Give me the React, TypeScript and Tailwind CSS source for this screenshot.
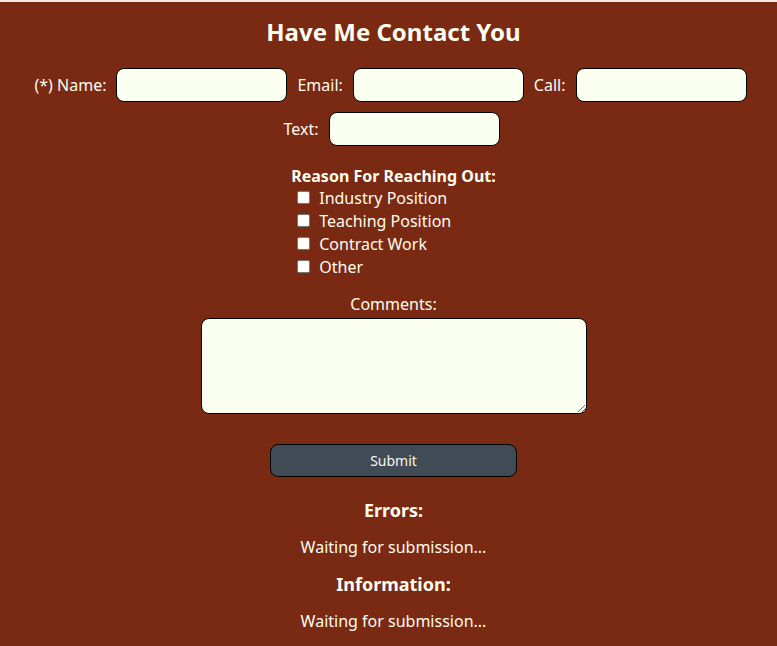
import { useState } from 'react'

const reasons = ['Industry Position', 'Teaching Position', 'Contract Work', 'Other']

function Field({ label, className = '' }: { label: string; className?: string }) {
  return (
    <label className={`inline-flex items-center gap-[10px] ${className}`}>
      <span>{label}</span>
      <input
        type="text"
        className="h-[34px] w-[171px] rounded-[8px] border border-black bg-[#fbfff0] px-2 text-black outline-none"
      />
    </label>
  )
}

export default function App() {
  const [checked, setChecked] = useState<string[]>([])

  function toggle(r: string) {
    setChecked((c) => (c.includes(r) ? c.filter((x) => x !== r) : [...c, r]))
  }

  return (
    <div className="min-h-[646px] border-t-2 border-[#f3e9e6] bg-[#7a2913] pl-[10px] text-[16px] text-[#fdfdf0] [font-family:'Noto_Sans',sans-serif]">
      <h1 className="pt-[13px] text-center text-[24px] font-bold leading-[34px]">Have Me Contact You</h1>

      <form className="flex flex-col items-center" onSubmit={(e) => e.preventDefault()}>
        <div className="mt-[19px] flex items-center justify-center gap-[10px] pr-[6px]">
          <Field label="(*) Name:" />
          <Field label="Email:" />
          <Field label="Call:" />
        </div>
        <div className="mt-[10px] flex items-center justify-center pr-[4px]">
          <Field label="Text:" />
        </div>

        <fieldset className="mt-[19px] flex flex-col">
          <legend className="text-center font-bold leading-[22px]">Reason For Reaching Out:</legend>
          <div className="-mt-[1px] flex flex-col pl-[6px]">
            {reasons.map((r) => (
              <label key={r} className="flex h-[23px] items-center gap-[9px]">
                <input
                  type="checkbox"
                  checked={checked.includes(r)}
                  onChange={() => toggle(r)}
                  className="h-[13px] w-[13px] appearance-none rounded-[2px] border border-[#767676] bg-white checked:bg-[#0075ff]"
                />
                <span>{r}</span>
              </label>
            ))}
          </div>
        </fieldset>

        <label className="mt-[15px] flex flex-col items-center gap-[3px]">
          <span className="leading-[22px]">Comments:</span>
          <textarea className="h-[96px] w-[386px] rounded-[8px] border border-black bg-[#fbfff0] p-1 text-black outline-none" />
        </label>

        <button
          type="submit"
          className="mt-[30px] h-[33px] w-[247px] rounded-[8px] border border-black bg-[#414b55] text-[14px] text-[#f5f7f0]"
        >
          Submit
        </button>
      </form>

      <section className="mt-[20px] text-center">
        <h2 className="text-[18px] font-bold leading-[26px]">Errors:</h2>
        <p className="mt-[13px] leading-[22px]">Waiting for submission...</p>
        <h2 className="mt-[13px] text-[18px] font-bold leading-[26px]">Information:</h2>
        <p className="mt-[13px] leading-[22px]">Waiting for submission...</p>
      </section>
    </div>
  )
}
